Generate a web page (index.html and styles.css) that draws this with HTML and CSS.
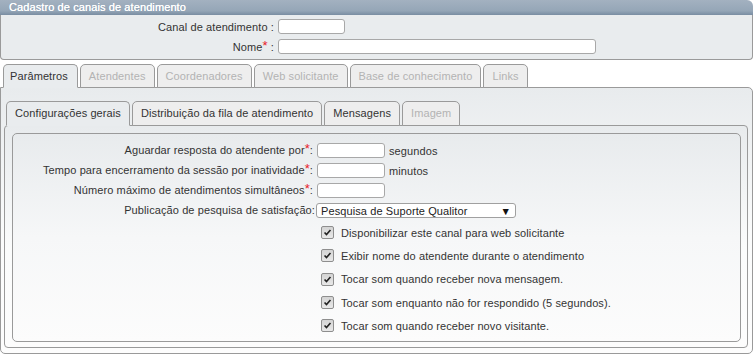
FILE: index.html
```html
<!DOCTYPE html>
<html lang="pt">
<head>
<meta charset="utf-8">
<title>Cadastro de canais de atendimento</title>
<link rel="stylesheet" href="styles.css">
</head>
<body>
<div class="panel">
  <div class="panel-head">Cadastro de canais de atendimento</div>
  <div class="panel-body">
    <div class="frow"><span class="lbl">Canal de atendimento :</span><span class="inp w-short"></span></div>
    <div class="frow"><span class="lbl">Nome<span class="req">*</span> :</span><span class="inp w-long"></span></div>
  </div>
</div>

<div class="tabs-outer">
  <ul class="tabbar outer-bar">
    <li class="tab active first">Parâmetros</li>
    <li class="tab disabled">Atendentes</li>
    <li class="tab disabled">Coordenadores</li>
    <li class="tab disabled">Web solicitante</li>
    <li class="tab disabled">Base de conhecimento</li>
    <li class="tab disabled">Links</li>
  </ul>
  <div class="tabpanel">
    <ul class="tabbar inner-bar">
      <li class="tab active">Configurações gerais</li>
      <li class="tab">Distribuição da fila de atendimento</li>
      <li class="tab">Mensagens</li>
      <li class="tab disabled">Imagem</li>
    </ul>
    <div class="tabpanel inner-panel">
      <div class="content">
        <div class="grid">
          <span class="glbl">Aguardar resposta do atendente por<span class="req">*</span>:</span>
          <span class="gval"><span class="inp w-num"></span><span class="unit">segundos</span></span>

          <span class="glbl">Tempo para encerramento da sessão por inatividade<span class="req">*</span>:</span>
          <span class="gval"><span class="inp w-num"></span><span class="unit">minutos</span></span>

          <span class="glbl">Número máximo de atendimentos simultâneos<span class="req">*</span>:</span>
          <span class="gval"><span class="inp w-num"></span></span>

          <span class="glbl sel-lbl">Publicação de pesquisa de satisfação:</span>
          <span class="gval"><span class="select"><span class="sel-text">Pesquisa de Suporte Qualitor</span><span class="sel-arrow">▼</span></span></span>
        </div>
        <ul class="checks">
          <li><span class="cb"><svg viewBox="0 0 13 13" width="13" height="13"><path d="M3 6.5 L5.3 9 L10 3.6" fill="none" stroke="#222" stroke-width="1.9"/></svg></span>Disponibilizar este canal para web solicitante</li>
          <li><span class="cb"><svg viewBox="0 0 13 13" width="13" height="13"><path d="M3 6.5 L5.3 9 L10 3.6" fill="none" stroke="#222" stroke-width="1.9"/></svg></span>Exibir nome do atendente durante o atendimento</li>
          <li><span class="cb"><svg viewBox="0 0 13 13" width="13" height="13"><path d="M3 6.5 L5.3 9 L10 3.6" fill="none" stroke="#222" stroke-width="1.9"/></svg></span>Tocar som quando receber nova mensagem.</li>
          <li><span class="cb"><svg viewBox="0 0 13 13" width="13" height="13"><path d="M3 6.5 L5.3 9 L10 3.6" fill="none" stroke="#222" stroke-width="1.9"/></svg></span>Tocar som enquanto não for respondido (5 segundos).</li>
          <li><span class="cb"><svg viewBox="0 0 13 13" width="13" height="13"><path d="M3 6.5 L5.3 9 L10 3.6" fill="none" stroke="#222" stroke-width="1.9"/></svg></span>Tocar som quando receber novo visitante.</li>
        </ul>
      </div>
    </div>
  </div>
</div>
</body>
</html>
```

FILE: styles.css
```css
* { box-sizing: border-box; }
html, body { margin: 0; padding: 0; background: #fff; }
body {
  width: 753px;
  font-family: "Liberation Sans", Arial, sans-serif;
  font-size: 11px;
  letter-spacing: 0.1px;
  color: #333;
}

.req { color: #e8202a; font-size: 13px; line-height: 10px; vertical-align: 1px; }

/* top panel */
.panel { width: 753px; }
.panel-head {
  height: 15px;
  line-height: 15px;
  padding-left: 9px;
  color: #fff;
  background: linear-gradient(#a3b1c0, #95a6b7 72%, #798da2);
  border-radius: 0 6px 0 0;
  text-shadow: 0 0 0.4px #fff;
}
.panel-body {
  height: 45px;
  background: #e9ecee;
  border: 1px solid #9a9a9a;
  border-top: none;
  border-radius: 0 0 4px 4px;
  padding-top: 4px;
  display: flex;
  flex-direction: column;
  gap: 5px;
}
.frow { display: flex; align-items: center; height: 15px; }
.lbl { width: 273px; text-align: right; margin-right: 4px; }
.inp {
  display: inline-block;
  height: 15px;
  background: #fff;
  border: 1px solid #a8a8a8;
  border-radius: 3px;
}
.w-short { width: 67px; }
.w-long { width: 318px; }
.w-num { width: 68px; }

/* tabs */
.tabs-outer { margin-top: 4px; }
.tabbar {
  list-style: none;
  margin: 0;
  padding: 0 0 0 3px;
  display: flex;
  gap: 2px;
  position: relative;
  z-index: 1;
}
.tab {
  height: 24px;
  line-height: 22px;
  padding: 0 8px;
  border: 1px solid #9a9a9a;
  border-radius: 5px 5px 0 0;
  background: #eeeeee;
  color: #333;
  margin-bottom: -1px;
}
.tab.first { padding: 0 9px 0 6px; }
.tab.disabled { color: #b3b3b3; }
.tab.active { background: #e9ecee; border-bottom-color: #e9ecee; }

.tabpanel {
  border: 1px solid #9a9a9a;
  border-radius: 0 5px 5px 5px;
  background: linear-gradient(#e8ebed, #fbfcfc 55%, #fdfdfd);
  padding: 13px 4px 5px 3px;
  height: 267px;
}
.inner-bar { padding-left: 2px; }
.inner-bar .tab { height: 25px; line-height: 23px; }
.inner-panel {
  height: 223px;
  padding: 7px 6px 5px 7px;
  border-radius: 4px;
}
.content {
  height: 209px;
  border: 1px solid #9a9a9a;
  border-radius: 5px;
  background: linear-gradient(#e8ebed, #f6f7f8 50%, #fcfcfc);
  padding-top: 9px;
}

.grid {
  display: grid;
  grid-template-columns: 300px auto;
  column-gap: 4px;
  row-gap: 5px;
  align-items: center;
}
.glbl { text-align: right; height: 15px; line-height: 15px; }
.sel-lbl { margin-right: -2px; }
.gval { display: flex; align-items: center; height: 15px; }
.unit { margin-left: 4px; }
.select {
  margin-left: -1px;
  width: 200px;
  height: 15px;
  border: 1px solid #a0a0a0;
  border-radius: 3px;
  background: #fff;
  display: flex;
  align-items: center;
  justify-content: space-between;
  padding: 0 4px 0 4px;
  color: #222;
}
.sel-arrow { font-size: 10.5px; line-height: 12px; color: #111; }

.checks {
  list-style: none;
  margin: 8px 0 0 0;
  padding: 0 0 0 308px;
  display: flex;
  flex-direction: column;
  gap: 10px;
}
.checks li {
  display: flex;
  align-items: center;
  height: 13.3px;
}
.cb {
  width: 13px;
  height: 13px;
  border: 1px solid #8e8e8e;
  background: linear-gradient(#d4d4d4, #e8e8e8);
  border-radius: 2px;
  margin-right: 7px;
  display: flex;
  align-items: center;
  justify-content: center;
}
.cb svg { display: block; width: 11px; height: 11px; }
```
